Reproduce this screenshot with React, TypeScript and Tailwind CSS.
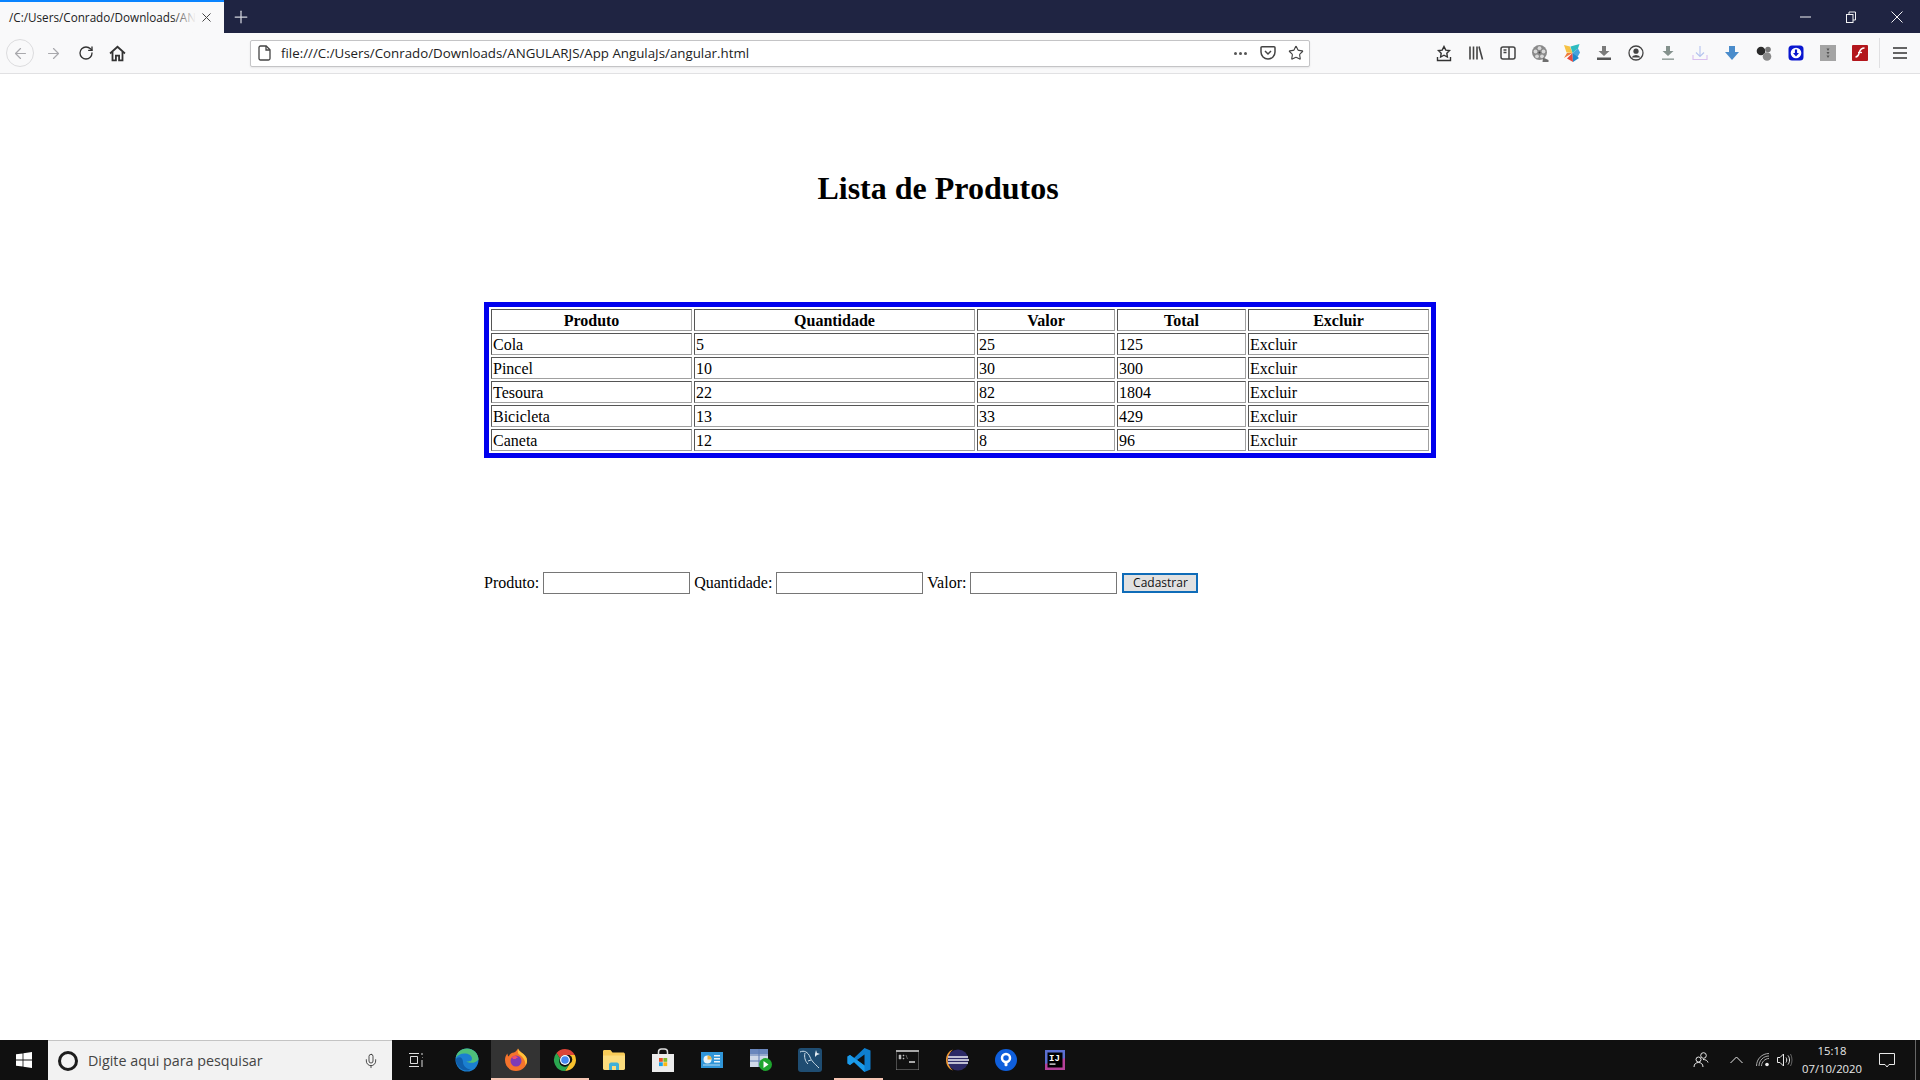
import { ArrowLeft, ArrowRight, RotateCw, Plus, X, Star, Mic } from 'lucide-react'

const produtos = [
    { nome: 'Cola', qtd: 5, valor: 25 },
    { nome: 'Pincel', qtd: 10, valor: 30 },
    { nome: 'Tesoura', qtd: 22, valor: 82 },
    { nome: 'Bicicleta', qtd: 13, valor: 33 },
    { nome: 'Caneta', qtd: 12, valor: 8 },
]

const thClass = "border border-t-[#555] border-l-[#555] border-r-[#a0a0a0] border-b-[#a0a0a0] px-px pt-[2px] pb-0 font-bold text-center"
const tdClass = "border border-t-[#555] border-l-[#555] border-r-[#a0a0a0] border-b-[#a0a0a0] px-px pt-[2px] pb-0"

const TabBar = () => (
    <div className="flex h-[33px] items-stretch bg-[#1f2442]">
        <div className="relative flex w-[224px] items-center border-t-2 border-[#0a84ff] bg-[#f9f9fa] pl-[9px] font-['Open_Sans',sans-serif] text-[11.700px] text-[#222]">
            <span className="w-[185px] whitespace-nowrap">/C:/Users/Conrado/Downloads/AN</span>
            <span className="absolute left-[172px] top-0 h-full w-[24px] bg-gradient-to-r from-transparent to-[#f9f9fa]"></span>
            <X size={15} strokeWidth={1.6} className="ml-[5px] text-[#444]" />
        </div>
        <div className="flex w-[34px] items-center justify-center text-[#d4d6de]">
            <Plus size={20} strokeWidth={1.5} />
        </div>
        <div className="ml-auto flex items-center text-[#f2f2f4]">
            <div className="flex w-[46px] justify-center">
                <svg width="11" height="2" viewBox="0 0 11 2" stroke="currentColor"><path d="M0 1h11" /></svg>
            </div>
            <div className="flex w-[46px] justify-center">
                <svg width="12" height="12" viewBox="0 0 12 12" fill="none" stroke="currentColor">
                    <rect x="1.5" y="3.5" width="6.5" height="8" />
                    <path d="M4 3.5V1h6.5v8H8" />
                </svg>
            </div>
            <div className="flex w-[46px] justify-center">
                <svg width="12" height="12" viewBox="0 0 12 12" stroke="currentColor"><path d="M.5.5l11 11M11.5.5l-11 11" /></svg>
            </div>
        </div>
    </div>
)

const HomeIcon = () => (
    <svg width="17" height="17" viewBox="0 0 16 16" fill="none" stroke="#333" strokeWidth="1.7">
        <path d="M1 8l7-6.3L15 8" />
        <path d="M3.3 6.500V14.500h3.200V10h3V14.500h3.200V6.500" />
    </svg>
)

const FileIcon = () => (
    <svg width="14" height="16" viewBox="0 0 14 16" fill="none" stroke="#444" strokeWidth="1.3">
        <path d="M2.500 1h5.700L12 4.800V13.500a1.500 1.500 0 0 1-1.500 1.500h-8A1.500 1.500 0 0 1 1 13.500V2.500A1.500 1.500 0 0 1 2.500 1z" />
        <path d="M8 1v4h4" />
    </svg>
)

const PocketIcon = () => (
    <svg width="16" height="16" viewBox="0 0 16 16" fill="none" stroke="#444" strokeWidth="1.5">
        <path d="M2 1.800h12a1 1 0 0 1 1 1V7a7 7 0 0 1-14 0V2.800a1 1 0 0 1 1-1z" />
        <path d="M5 6l3 3 3-3" />
    </svg>
)

const ToolbarIcons = () => (
    <div className="flex h-full items-center">
        {/* pagina salva */}
        <div className="flex w-8 justify-center">
            <svg width="16" height="17" viewBox="0 0 16 17" fill="none" stroke="#333" strokeWidth="1.4">
                <path d="M8 1.500l1.800 3.600 3.700.5-2.700 2.600.6 3.800L8 10.200l-3.400 1.800.6-3.800L2.500 5.600l3.700-.5z" />
                <path d="M1.500 12v3.500h13V12" />
            </svg>
        </div>
        {/* biblioteca */}
        <div className="flex w-8 justify-center">
            <svg width="16" height="16" viewBox="0 0 16 16" fill="none" stroke="#444" strokeWidth="1.6">
                <path d="M2 1.500v13M5.500 1.500v13M9 1.500v13M11 1.500l3.500 13" />
            </svg>
        </div>
        {/* sidebar */}
        <div className="flex w-8 justify-center">
            <svg width="16" height="16" viewBox="0 0 16 16" fill="none" stroke="#444" strokeWidth="1.5">
                <rect x="1" y="2" width="14" height="12" rx="2" />
                <path d="M9 2v12M3.500 5H6.500M3.500 7.500H6.500" />
            </svg>
        </div>
        {/* rolo de filme */}
        <div className="flex w-8 justify-center">
            <svg width="17" height="18" viewBox="0 0 17 18">
                <circle cx="7.500" cy="8.500" r="7.500" fill="#8a8a8a" />
                <circle cx="7.500" cy="4.200" r="1.900" fill="#d8d8d8" />
                <circle cx="3.500" cy="7.500" r="1.900" fill="#d8d8d8" />
                <circle cx="11.500" cy="7.500" r="1.900" fill="#d8d8d8" />
                <circle cx="5" cy="12.300" r="1.900" fill="#d8d8d8" />
                <circle cx="10" cy="12.300" r="1.900" fill="#d8d8d8" />
                <circle cx="7.500" cy="8.500" r="1" fill="#444" />
                <path d="M11 13.500l5.500 2.500v2h-6z" fill="#6e6e6e" />
            </svg>
        </div>
        {/* cata-vento */}
        <div className="flex w-8 justify-center">
            <svg width="16" height="18" viewBox="0 0 16 18">
                <path d="M0 1l6 1.500L8.500 9 2.500 8.500z" fill="#f6c244" />
                <path d="M8.500 9L3 9l-3 5z" fill="#ee7d3a" />
                <path d="M15.500 0L14 4.500 8.500 9 6.500 2.500z" fill="#2fbcc0" />
                <path d="M16 8.500L13 14 8.500 9 14 4.500z" fill="#43a3dc" />
                <path d="M8.500 9l.5 9-6-3.500z" fill="#e8483c" />
                <path d="M8.500 9L15 14l-6 4z" fill="#1e88c8" />
            </svg>
        </div>
        {/* download com barra */}
        <div className="flex w-8 justify-center">
            <svg width="16" height="16" viewBox="0 0 16 16">
                <path d="M6 1h4v5h3.500L8 11 2.500 6H6z" fill="#7b7b7b" />
                <rect x="1" y="12.500" width="14" height="2.500" fill="#555" />
            </svg>
        </div>
        {/* perfil */}
        <div className="flex w-8 justify-center">
            <svg width="16" height="16" viewBox="0 0 16 16" fill="none">
                <circle cx="8" cy="8" r="7" stroke="#444" strokeWidth="1.300" />
                <circle cx="8" cy="6.200" r="2.600" fill="#444" />
                <path d="M3.500 12.500a4.800 4 0 0 1 9 0z" fill="#444" />
            </svg>
        </div>
        <div className="flex w-8 justify-center">
            <svg width="16" height="16" viewBox="0 0 16 16">
                <path d="M6 1h4v5h3.500L8 11 2.500 6H6z" fill="#84918c" />
                <rect x="2" y="13.500" width="12" height="1.300" fill="#84918c" />
            </svg>
        </div>
        <div className="flex w-8 justify-center">
            <svg width="16" height="16" viewBox="0 0 16 16" fill="none" strokeWidth="1.100">
                <path d="M8 1v10M4 7.500l4 4 4-4" stroke="#b5c4ee" />
                <path d="M1 10v4.500h14V10" stroke="#d9c0ee" />
            </svg>
        </div>
        <div className="flex w-8 justify-center">
            <svg width="16" height="16" viewBox="0 0 16 16">
                <path d="M5 1h6v6h4l-7 8-7-8h4z" fill="#4a8ccb" />
            </svg>
        </div>
        <div className="flex w-8 justify-center">
            <svg width="17" height="17" viewBox="0 0 17 17">
                <circle cx="5" cy="6" r="4.300" fill="#2a2a2a" />
                <circle cx="12" cy="4.500" r="2.800" fill="#777" />
                <circle cx="11" cy="11.500" r="4.300" fill="#8a8a8a" />
            </svg>
        </div>
        <div className="flex w-8 justify-center">
            <svg width="16" height="16" viewBox="0 0 16 16">
                <rect x="0.500" y="0.500" width="15" height="15" rx="3.500" fill="#0a17cf" />
                <circle cx="8" cy="8" r="5.300" fill="#fff" />
                <path d="M6.900 4.500h2.200v3.500h1.900L8 11.500 5 8h1.900z" fill="#0a17cf" />
            </svg>
        </div>
        <div className="flex w-8 justify-center">
            <svg width="16" height="16" viewBox="0 0 16 16">
                <rect width="16" height="16" fill="#a4a4a4" />
                <path d="M6.500 3.500h3L8 6zM6.500 7h3L8 9.500zM6.500 10.500h3L8 13z" fill="#555" />
            </svg>
        </div>
        <div className="flex w-8 justify-center">
            <svg width="16" height="16" viewBox="0 0 16 16">
                <rect width="16" height="16" rx="1" fill="#b3161c" />
                <path d="M12.500 3C9 3 8 5 7.300 7.500 6.700 10 6 11.800 3.500 12" fill="none" stroke="#fff" strokeWidth="1.500" />
                <path d="M6 7.500h4" stroke="#fff" strokeWidth="1.300" />
            </svg>
        </div>
        <div className="ml-[3px] flex h-[30px] w-[41px] items-center justify-center border-l border-[#e0e0e2]">
            <svg width="16" height="14" viewBox="0 0 16 14" stroke="#333" strokeWidth="1.700"><path d="M1 2h14M1 7h14M1 12h14" /></svg>
        </div>
    </div>
)

const NavBar = () => (
    <div className="flex h-[41px] items-center border-b border-[#e1e1e3] bg-[#f9f9fa]">
        <div className="ml-[6px] flex h-[28px] w-[28px] items-center justify-center rounded-full border border-[#dcdcde] text-[#a9a9ad]">
            <ArrowLeft size={17} strokeWidth={1.700} />
        </div>
        <div className="ml-[5px] flex w-[28px] justify-center text-[#a9a9ad]"><ArrowRight size={17} strokeWidth={1.700} /></div>
        <div className="ml-[5px] flex w-[28px] justify-center text-[#333]"><RotateCw size={16} strokeWidth={2} /></div>
        <div className="ml-[3px] flex w-[28px] justify-center"><HomeIcon /></div>
        <div className="ml-[119px] flex h-[27px] w-[1060px] items-center rounded-[2px] border border-[#c4c4c6] bg-white pl-[7px] shadow-[0_1px_2px_rgba(0,0,0,0.08)]">
            <FileIcon />
            <span className="ml-[9px] pt-[2px] font-['Open_Sans',sans-serif] text-[13.300px] text-[#222]">file:///C:/Users/Conrado/Downloads/ANGULARJS/App AngulaJs/angular.html</span>
            <div className="ml-auto flex items-center text-[#444]">
                <span className="mr-[13px] flex gap-[2px]">
                    <i className="h-[3px] w-[3px] rounded-full bg-[#555]"></i>
                    <i className="h-[3px] w-[3px] rounded-full bg-[#555]"></i>
                    <i className="h-[3px] w-[3px] rounded-full bg-[#555]"></i>
                </span>
                <PocketIcon />
                <Star size={16} strokeWidth={1.700} className="ml-[12px] mr-[5px]" />
            </div>
        </div>
        <div className="ml-auto h-full"><ToolbarIcons /></div>
    </div>
)

const Lista = () => (
    <main className="flex-1 bg-white font-['Liberation_Serif',serif] text-[16px] leading-normal text-black">
        <h1 className="pr-[44px] pt-[96px] text-center text-[32px] font-bold leading-[37px]">Lista de Produtos</h1>
        <table className="mx-auto mt-[95px] w-[952px] table-fixed border-separate border-spacing-[2px] border-[5px] border-[#0000ee] leading-[18px]">
            <thead>
                <tr>
                    <th className={`w-[201px] ${thClass}`}>Produto</th>
                    <th className={`w-[281px] ${thClass}`}>Quantidade</th>
                    <th className={`w-[138px] ${thClass}`}>Valor</th>
                    <th className={`w-[129px] ${thClass}`}>Total</th>
                    <th className={`w-[181px] ${thClass}`}>Excluir</th>
                </tr>
            </thead>
            <tbody>
                {produtos.map((p) => (
                    <tr key={p.nome}>
                        <td className={tdClass}>{p.nome}</td>
                        <td className={tdClass}>{p.qtd}</td>
                        <td className={tdClass}>{p.valor}</td>
                        <td className={tdClass}>{p.qtd * p.valor}</td>
                        <td className={tdClass}>Excluir</td>
                    </tr>
                ))}
            </tbody>
        </table>
        <form className="ml-[484px] mt-[113px] flex items-center gap-[4px]">
            <label>Produto:</label>
            <input type="text" className="h-[22px] w-[147px] border border-[#767676] bg-white" />
            <label>Quantidade:</label>
            <input type="text" className="h-[22px] w-[147px] border border-[#767676] bg-white" />
            <label>Valor:</label>
            <input type="text" className="h-[22px] w-[147px] border border-[#767676] bg-white" />
            <button type="button" className="ml-[1px] h-[20px] w-[76px] border-2 border-[#0f6cb8] bg-[#e1e1e1] font-['Open_Sans',sans-serif] text-[12px] leading-none text-[#111]">Cadastrar</button>
        </form>
    </main>
)

const WinLogo = () => (
    <svg width="16" height="16" viewBox="0 0 16 16" fill="#fff">
        <path d="M0 2.300l6.600-.9v6.200H0zM7.400 1.300L16 0v7.600H7.400zM0 8.400h6.600v6.200L0 13.700zM7.400 8.400H16V16l-8.600-1.300z" />
    </svg>
)

const Slot = ({ active, mark, children }: { active?: boolean; mark?: boolean; children: React.ReactNode }) => (
    <div className={active ? "relative flex h-10 w-[49px] items-center justify-center bg-[#333]" : "relative flex h-10 w-[49px] items-center justify-center"}>
        {children}
        {mark && <span className="absolute bottom-0 left-0 h-[2px] w-full bg-[#f6c5b3]"></span>}
    </div>
)

const TaskApps = () => (
    <div className="ml-px flex">
        <Slot>
            <svg width="16" height="16" viewBox="0 0 16 16" fill="none" stroke="#ddd" className="mr-[3px]">
                <path d="M1 1.500h10M1 14.500h10M2.500 4.500h7v7h-7zM14 1v2M14 5.500h.5M14 8v7" />
            </svg>
        </Slot>
        <Slot>
            <svg width="24" height="24" viewBox="0 0 24 24">
                <circle cx="12" cy="12" r="11.500" fill="#1b7fd0" />
                <path d="M23.500 12C23.500 5.500 18.500.5 12 .5 6 .5 1.500 4.500.7 10c2-3.500 6-5 10-4.500 5 .5 7 4 6 6.500-1 1.800-4 1.500-5.500 1.200 2.500 2 9 3 12.300-1.700z" fill="#4ec07a" />
                <path d="M8 14c0 4 3.500 7 8 7.500-1.300.6-2.700 1-4 1-6 0-11-5-11.300-11C3 8 8 8.500 8 14z" fill="#0f5eaa" />
            </svg>
        </Slot>
        <Slot active mark>
            <svg width="24" height="24" viewBox="0 0 24 24">
                <path d="M12 23C5.700 23 1 18.200 1 12c0-3 1-5 2.500-6.500 0 1.500.5 2.500 1.200 3C5.700 5.700 8 4.500 10 4.500c2-1 3.500-2.700 4-4 .5 1.500 1.500 2.500 3 3.700C20.500 6.500 23 9 23 12.500 23 18.500 18 23 12 23z" fill="#f5732c" />
                <path d="M14 .5c.5 1.500 1.500 2.500 3 3.700C20.500 6.500 23 9 23 12.500c0 2-.5 3.500-1.500 5 0-6-3-9-7-11.500-.8-1.500-1-3.500-.5-5.500z" fill="#ffc13a" />
                <circle cx="12" cy="13" r="5.500" fill="#7d3bb5" />
                <path d="M8 9c2-1.500 5-1 6 .5-1 .2-2 .8-2.200 1.500H9z" fill="#f14e6f" />
            </svg>
        </Slot>
        <Slot mark>
            <svg width="24" height="24" viewBox="0 0 24 24">
                <path d="M12 1a11 11 0 0 1 9.800 6H12a5 5 0 0 0-5 3.500L3.500 5A11 11 0 0 1 12 1z" fill="#dc4437" />
                <path d="M21.800 7A11 11 0 0 1 12 23l4.500-7a5 5 0 0 0 0-9z" fill="#f8c12d" />
                <path d="M3.500 5A11 11 0 0 0 12 23l4.500-7a5 5 0 0 1-9.500-5.500z" fill="#2aa64f" />
                <circle cx="12" cy="12" r="5" fill="#fff" />
                <circle cx="12" cy="12" r="3.800" fill="#4688f1" />
            </svg>
        </Slot>
        <Slot>
            <svg width="24" height="22" viewBox="0 0 24 22">
                <path d="M1 2.500C1 1.500 1.500 1 2.500 1h6l2 2.500H21c1 0 2 .5 2 2V19c0 1-1 2-2 2H3c-1 0-2-1-2-2z" fill="#f7cb58" />
                <path d="M1 6.500h22V19c0 1-1 2-2 2H3c-1 0-2-1-2-2z" fill="#fbdc7d" />
                <path d="M7 21v-5.500c0-1 1-2 2-2h6c1 0 2 1 2 2V21h-3v-4h-4v4z" fill="#3fb0d8" />
            </svg>
        </Slot>
        <Slot>
            <svg width="24" height="25" viewBox="0 0 24 25">
                <path d="M7.500 7V4a3 3 0 0 1 3-3h3a3 3 0 0 1 3 3v3" fill="none" stroke="#ddd" strokeWidth="1.500" />
                <rect x="1" y="6" width="22" height="18" fill="#ececec" />
                <rect x="8" y="10" width="3.800" height="3.800" fill="#e8512a" />
                <rect x="12.400" y="10" width="3.800" height="3.800" fill="#7ebb2b" />
                <rect x="8" y="14.300" width="3.800" height="3.800" fill="#1ba3e8" />
                <rect x="12.400" y="14.300" width="3.800" height="3.800" fill="#fbb812" />
            </svg>
        </Slot>
        <Slot>
            <svg width="22" height="16" viewBox="0 0 22 16">
                <rect width="22" height="16" fill="#2f95d8" />
                <circle cx="6.500" cy="7.500" r="4" fill="#e8f2f8" />
                <path d="M6.500 7.500V3.500a4 4 0 0 1 4 4z" fill="#f2b53c" />
                <rect x="13" y="3" width="6" height="1.500" fill="#e8f2f8" />
                <rect x="13" y="6" width="6" height="1.500" fill="#e8f2f8" />
                <rect x="13" y="9" width="6" height="1.500" fill="#e8f2f8" />
                <rect x="2" y="12.500" width="17" height="1" fill="#b7dcf1" />
            </svg>
        </Slot>
        <Slot>
            <svg width="22" height="22" viewBox="0 0 22 22">
                <rect width="18" height="18" fill="#cfd8e8" />
                <rect y="0" width="18" height="5" fill="#6a87bd" />
                <path d="M0 6h18M0 12h18M9 0v18" stroke="#5a78b0" strokeWidth="1" />
                <circle cx="15.500" cy="15.500" r="6.500" fill="#1ea52e" />
                <path d="M13.500 12l5 3.500-5 3.500z" fill="#fff" />
            </svg>
        </Slot>
        <Slot>
            <svg width="24" height="24" viewBox="0 0 24 24">
                <rect width="24" height="24" rx="3" fill="#1f4d72" />
                <path d="M2 4c4-2 8 0 10 5 1.500 4 4 6 9 11M7 5c-1 4 0 8 3 11M13 12l-3 1" fill="none" stroke="#cfe0ea" strokeWidth="1" />
                <path d="M18 2l1 3 3 1-3 1-2 2 0-3z" fill="#e6eef3" />
            </svg>
        </Slot>
        <Slot mark>
            <svg width="24" height="24" viewBox="0 0 24 24">
                <path d="M17.500 0L7 10 3 7 .5 8.500v7L3 17l4-3 10.500 10 6-2.500V2.500z" fill="#0e7fd0" />
                <path d="M17.500 6.500L10 12l7.500 5.500z" fill="#101010" />
                <path d="M.5 8.500L3 7l14.500 10.500V24L7 14 3 17 .5 15.500z" fill="#1b9bea" />
            </svg>
        </Slot>
        <Slot>
            <svg width="23" height="20" viewBox="0 0 23 20">
                <rect width="23" height="20" fill="#111" stroke="#888" />
                <rect width="23" height="2" fill="#aaa" />
                <path d="M13 12h6" stroke="#ddd" strokeWidth="1.500" />
                <path d="M3 5h2v4H3zM7 5h1v1H7zM7 8h1v1H7zM10 5l1.500 4" fill="#bbb" stroke="#bbb" strokeWidth=".5" />
            </svg>
        </Slot>
        <Slot>
            <svg width="24" height="22" viewBox="0 0 24 22">
                <path d="M8 0.500C3.500 2 1 6 1 11s2.500 9 7 10.500C5 19 3.500 15.500 3.500 11S5 3 8 .500z" fill="#f09a34" />
                <circle cx="13" cy="11" r="10.500" fill="#2d2a66" />
                <path d="M3 8h20M3 11h21M3 14h20" stroke="#f0f0f6" strokeWidth="1.400" />
            </svg>
        </Slot>
        <Slot>
            <svg width="22" height="22" viewBox="0 0 22 22">
                <circle cx="11" cy="11" r="11" fill="#0f5fdc" />
                <circle cx="11" cy="9" r="4" fill="none" stroke="#fff" strokeWidth="2.500" />
                <path d="M9.500 12.500h3v4l-1.500 1-1.500-1z" fill="#fff" />
            </svg>
        </Slot>
        <Slot>
            <svg width="20" height="20" viewBox="0 0 20 20" className="font-['Liberation_Mono',monospace]">
                <rect width="20" height="20" fill="#b5419a" />
                <path d="M0 0h20v8L0 14z" fill="#5b6fd0" />
                <rect x="2.500" y="2.500" width="15" height="15" fill="#000" />
                <text x="4" y="11" fontSize="9" fontWeight="700" fill="#fff">IJ</text>
                <rect x="4.500" y="13.500" width="6" height="1.200" fill="#fff" />
            </svg>
        </Slot>
    </div>
)

const Tray = () => (
    <div className="ml-auto flex h-10 items-center text-[#e8e8e8]">
        <div className="flex w-[36px] justify-center">
            <svg width="16" height="16" viewBox="0 0 16 16" fill="none" stroke="currentColor">
                <circle cx="10.500" cy="3.500" r="2.800" />
                <circle cx="5.500" cy="7.500" r="2.500" />
                <path d="M1 15c0-3 2-4.500 4.500-4.500S10 12 10 15M10 7.500c2.500 0 4.500 1 5 3" />
            </svg>
        </div>
        <div className="flex w-[34px] justify-center">
            <svg width="13" height="8" viewBox="0 0 13 8" fill="none" stroke="currentColor"><path d="M.5 7L6.500 1l6 6" /></svg>
        </div>
        <div className="flex w-[20px] justify-center">
            <svg width="14" height="14" viewBox="0 0 14 14" fill="none" stroke="#aaa">
                <path d="M.500 13C.500 6 6 .5 13 .5M3 13c0-5.500 4.500-10 10-10M5.500 13c0-4 3.500-7.500 7.500-7.500" />
                <circle cx="11" cy="11.500" r="1.800" fill="#eee" stroke="none" />
            </svg>
        </div>
        <div className="flex w-[23px] justify-center">
            <svg width="16" height="14" viewBox="0 0 16 14" fill="none" stroke="currentColor">
                <path d="M.5 4.500h2.500L6.500 1v12L3 9.500H.5z" />
                <path d="M9 4.500c1 1.500 1 3.500 0 5M11 2.500c2 2.500 2 6.500 0 9" />
                <path d="M13.500 1c2 3.500 2 8.500 0 12" stroke="#666" />
            </svg>
        </div>
        <div className="flex w-[72px] flex-col items-center font-['Open_Sans',sans-serif] text-[11.300px] leading-[18px]">
            <span>15:18</span>
            <span>07/10/2020</span>
        </div>
        <div className="flex w-[47px] justify-center pr-[9px]">
            <svg width="16" height="16" viewBox="0 0 16 16" fill="none" stroke="currentColor">
                <path d="M.500 1.500h15v11H10l-2 2.500-2-2.500H.500z" />
            </svg>
        </div>
        <div className="h-full w-[5px] border-l border-[#666]"></div>
    </div>
)

const Taskbar = () => (
    <div className="flex h-10 items-center bg-[#101010]">
        <div className="flex h-10 w-[48px] items-center justify-center"><WinLogo /></div>
        <div className="flex h-10 w-[344px] items-center border-t border-[#c4c4c4] bg-[#f2f2f2] pl-[10px] font-['Open_Sans',sans-serif] text-[14.300px] text-[#444]">
            <span className="h-5 w-5 rounded-full border-[3px] border-[#1c1c1c]"></span>
            <span className="ml-[10px]">Digite aqui para pesquisar</span>
            <Mic size={16} strokeWidth={1.300} className="ml-auto mr-[13px] text-[#333]" />
        </div>
        <TaskApps />
        <Tray />
    </div>
)

export default function App() {
    return (
        <div className="flex h-[1080px] w-[1920px] flex-col overflow-hidden">
            <TabBar />
            <NavBar />
            <Lista />
            <Taskbar />
        </div>
    )
}
